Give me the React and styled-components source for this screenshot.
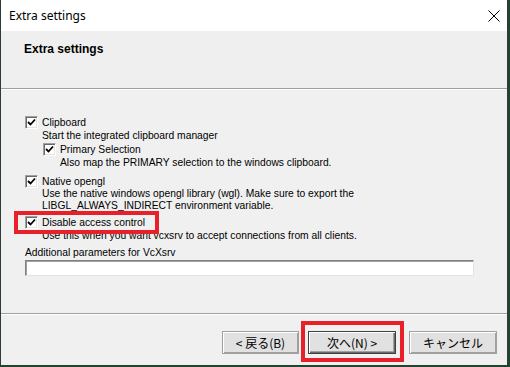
import React, { useState } from 'react';
import styled, { createGlobalStyle } from 'styled-components';

const GlobalStyle = createGlobalStyle`
  html, body {
    margin: 0;
    padding: 0;
    background: #1d4630;
  }
`;

// Fenêtre principale de l'assistant
const Window = styled.div`
  width: 508px;
  height: 366px;
  box-sizing: border-box;
  border: 1px solid #2c3d33;
  border-top: none;
  background: #f0f0f0;
  display: flex;
  flex-direction: column;
  overflow: hidden;
`;

const TitleBar = styled.div`
  height: 31px;
  background: #ffffff;
  display: flex;
  align-items: center;
  justify-content: space-between;
  padding: 0 0 0 8px;
  font-family: "Noto Sans", "Open Sans", sans-serif;
  font-size: 12px;
  color: #000;
`;

const CloseButton = styled.div`
  width: 26px;
  height: 31px;
  display: flex;
  align-items: center;
  justify-content: center;
`;

const Header = styled.div`
  height: 58px;
  background: #efefef;
  border-bottom: 1px solid #a0a0a0;
  box-shadow: 0 1px 0 #ffffff;
  padding: 11px 0 0 23px;
  box-sizing: border-box;
  font-family: "Liberation Sans", Arial, sans-serif;
  font-weight: bold;
  font-size: 12px;
  color: #000;
`;

const Content = styled.div`
  flex: 1;
  padding: 27px 0 0 24px;
  display: flex;
  flex-direction: column;
  font-family: "Liberation Sans", Arial, sans-serif;
  font-size: 10.3px;
  color: #000;
`;

const Option = styled.div`
  display: flex;
  flex-direction: column;
  margin-top: ${(p) => p.$top || 0}px;
  margin-left: ${(p) => p.$indent || 0}px;
`;

const CheckRow = styled.label`
  position: relative;
  display: flex;
  align-items: center;
  gap: 4px;
  height: 13px;
  cursor: default;
`;

const Box = styled.span`
  width: 13px;
  height: 13px;
  box-sizing: border-box;
  background: #ffffff;
  border: 1px solid;
  border-color: #a0a0a0 #ffffff #ffffff #a0a0a0;
  box-shadow: inset 1px 1px 0 #696969, inset -1px -1px 0 #e3e3e3;
  display: flex;
  align-items: center;
  justify-content: center;
  flex: none;
`;

const Desc = styled.div`
  margin-left: 17px;
  line-height: ${(p) => p.$lh || 13}px;
`;

const Label = styled.div`
  margin-top: ${(p) => p.$top || 0}px;
  line-height: 13px;
`;

const TextField = styled.input`
  margin-top: 1px;
  width: 449px;
  height: 16px;
  box-sizing: border-box;
  border: 1px solid;
  border-color: #808080 #e3e3e3 #e3e3e3 #808080;
  box-shadow: inset 1px 1px 0 #a0a0a0;
  background: #ffffff;
  outline: none;
  padding: 0 3px;
  font: inherit;
`;

const Footer = styled.div`
  height: 52px;
  border-top: 1px solid #a0a0a0;
  box-shadow: inset 0 1px 0 #ffffff;
  display: flex;
  justify-content: flex-end;
  align-items: flex-start;
  padding: 17px 10px 0 0;
  box-sizing: border-box;
`;

const ButtonWrap = styled.div`
  position: relative;
  margin-left: ${(p) => p.$gap || 0}px;
`;

const Button = styled.button`
  width: ${(p) => p.$w}px;
  height: 23px;
  padding: 0;
  background: #e1e1e1;
  border: 1px solid ${(p) => (p.$default ? '#404040' : '#a0a0a0')};
  box-shadow: ${(p) =>
    p.$default
      ? 'inset 1px 1px 0 #fff, inset -1px -1px 0 #696969, inset -2px -2px 0 #a0a0a0'
      : 'inset 1px 1px 0 #fff, inset -1px -1px 0 #a0a0a0'};
  font-family: "Noto Sans CJK JP", "Liberation Sans", sans-serif;
  font-size: 12px;
  color: #000;
`;

// Cadre rouge d'annotation par-dessus l'interface
const Highlight = styled.div`
  position: absolute;
  left: ${(p) => p.$l}px;
  top: ${(p) => p.$t}px;
  width: ${(p) => p.$w}px;
  height: ${(p) => p.$h}px;
  box-sizing: border-box;
  border: 4px solid #e8202a;
  pointer-events: none;
`;

const Check = () => (
  <svg width="9" height="9" viewBox="0 0 9 9">
    <path d="M1 4 L3.5 6.5 L8 1.5" stroke="#000" strokeWidth="1.8" fill="none" />
  </svg>
);

const Checkbox = ({ label, children }) => (
  <CheckRow>
    <Box>
      <Check />
    </Box>
    {label}
    {children}
  </CheckRow>
);

const App = () => {
  const [params, setParams] = useState('');

  return (
    <>
      <GlobalStyle />
      <Window>
        <TitleBar>
          <span>Extra settings</span>
          <CloseButton>
            <svg width="12" height="12" viewBox="0 0 12 12">
              <path d="M0.5 0.5 L11.5 11.5 M11.5 0.5 L0.5 11.5" stroke="#000" strokeWidth="1" />
            </svg>
          </CloseButton>
        </TitleBar>
        <Header>Extra settings</Header>

        <Content>
          <Option>
            <Checkbox label="Clipboard" />
            <Desc>Start the integrated clipboard manager</Desc>
            <Option $top={1}>
              <Option $indent={18}>
                <Checkbox label="Primary Selection" />
                <Desc>Also map the PRIMARY selection to the windows clipboard.</Desc>
              </Option>
            </Option>
          </Option>

          <Option $top={6}>
            <Checkbox label="Native opengl" />
            <Desc $lh={12}>
              Use the native windows opengl library (wgl). Make sure to export the
              <br />
              LIBGL_ALWAYS_INDIRECT environment variable.
            </Desc>
          </Option>

          <Option $top={4}>
            <Checkbox label="Disable access control">
              <Highlight $l={-11} $t={-5} $w={145} $h={23} />
            </Checkbox>
            <Desc>Use this when you want vcxsrv to accept connections from all clients.</Desc>
          </Option>

          <Label $top={4}>Additional parameters for VcXsrv</Label>
          <TextField value={params} onChange={(e) => setParams(e.target.value)} />
        </Content>

        <Footer>
          <ButtonWrap>
            <Button $w={77}>&lt; 戻る(B)</Button>
          </ButtonWrap>
          <ButtonWrap $gap={9}>
            <Button $w={88} $default>次へ(N) &gt;</Button>
            <Highlight $l={-7} $t={-10} $w={103} $h={41} />
          </ButtonWrap>
          <ButtonWrap $gap={13}>
            <Button $w={88}>キャンセル</Button>
          </ButtonWrap>
        </Footer>
      </Window>
    </>
  );
};

export default App;
